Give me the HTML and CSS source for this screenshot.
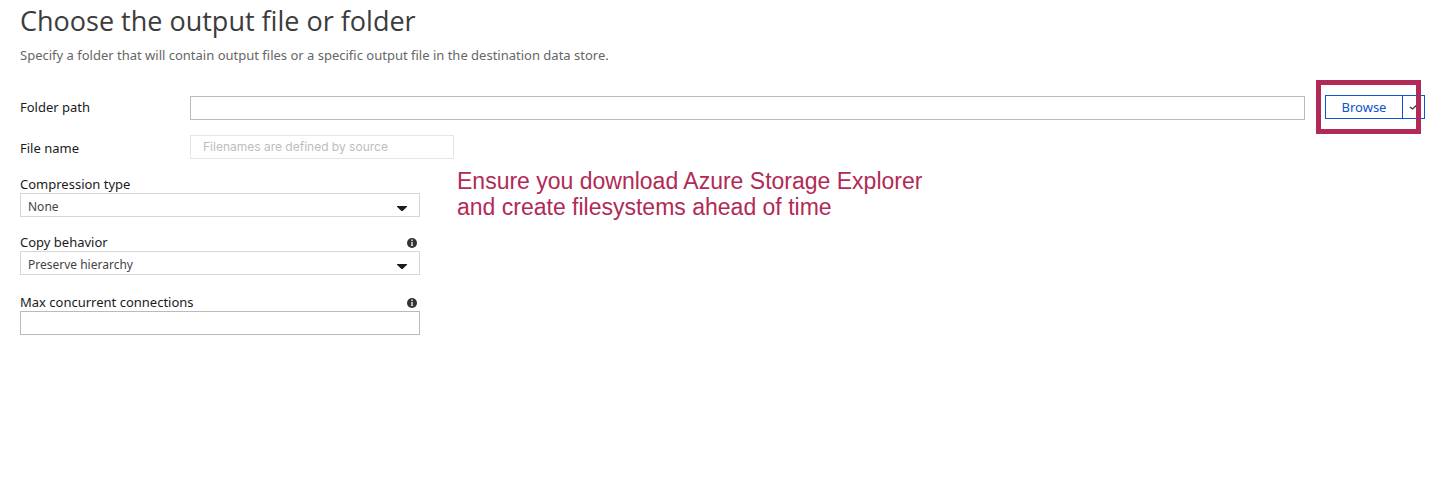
FILE: index.html
```html
<!DOCTYPE html>
<html lang="en">
<head>
<meta charset="utf-8">
<title>Choose the output file or folder</title>
<link rel="stylesheet" href="styles.css">
</head>
<body>
<main class="page">
  <h1 class="title">Choose the output file or folder</h1>
  <p class="subtitle">Specify a folder that will contain output files or a specific output file in the destination data store.</p>
  <form class="form">
    <div class="row row-folder">
      <label class="row-label" for="folder">Folder path</label>
      <input class="box folder" id="folder" type="text">
      <div class="split">
        <button class="browse" type="button">Browse</button>
        <button class="more" type="button" aria-label="More browse options"><svg width="10" height="8" viewBox="0 0 10 8"><path d="M1 4 3.500 6 9 1" fill="none" stroke="#333" stroke-width="1.300"/></svg></button>
        <span class="highlight"></span>
      </div>
    </div>
    <div class="row row-file">
      <label class="row-label" for="file">File name</label>
      <input class="box file" id="file" type="text" placeholder="Filenames are defined by source" disabled>
    </div>
    <div class="lower">
      <div class="fields">
        <div class="field">
          <div class="field-head"><label for="compression">Compression type</label></div>
          <div class="select-wrap">
            <select class="box select" id="compression"><option>None</option></select>
            <svg class="caret" width="10" height="6" viewBox="0 0 10 6"><path d="M0 0H10V.8L5.600 5H4.400L0 .8Z" fill="#1b1b1b"/></svg>
          </div>
        </div>
        <div class="field">
          <div class="field-head"><label for="copy">Copy behavior</label>
            <svg class="info" width="10" height="10" viewBox="0 0 10 10"><circle cx="5" cy="5" r="5" fill="#333"/><path d="M4.200 1.600H5.800V3H4.200ZM4 3.900H5.800V7.300H6.200V8.100H3.800V7.300H4.300V4.700H4Z" fill="#ddd"/></svg></div>
          <div class="select-wrap">
            <select class="box select" id="copy"><option>Preserve hierarchy</option></select>
            <svg class="caret" width="10" height="6" viewBox="0 0 10 6"><path d="M0 0H10V.8L5.600 5H4.400L0 .8Z" fill="#1b1b1b"/></svg>
          </div>
        </div>
        <div class="field field-max">
          <div class="field-head"><label for="max">Max concurrent connections</label>
            <svg class="info" width="10" height="10" viewBox="0 0 10 10"><circle cx="5" cy="5" r="5" fill="#333"/><path d="M4.200 1.600H5.800V3H4.200ZM4 3.900H5.800V7.300H6.200V8.100H3.800V7.300H4.300V4.700H4Z" fill="#ddd"/></svg></div>
          <input class="box" id="max" type="text">
        </div>
      </div>
      <p class="note">Ensure you download Azure Storage Explorer<br>and create filesystems ahead of time</p>
    </div>
  </form>
</main>
</body>
</html>
```
FILE: styles.css
```css
* { box-sizing: border-box; }
body {
  margin: 0;
  background: #fff;
  color: #1b1b1b;
  font: 13px/18px "Noto Sans", sans-serif;
}
.page { padding: 2px 8px 20px 20px; }
.title {
  margin: 0;
  font: 400 27px/38px "Open Sans", sans-serif;
  color: #3c3c3c;
}
.subtitle { margin: 6px 0 0; color: #666; }
.form { margin-top: 31px; }
.row { display: flex; align-items: center; }
.row-folder { align-items: flex-end; }
.row-file { margin-top: 15px; }
.row-label { width: 170px; flex: none; padding-top: 1px; }
.row-folder .row-label { padding: 0 0 4px; }
.box {
  display: block;
  width: 100%;
  height: 24px;
  border: 1px solid #bababa;
  border-radius: 0;
  background: #fff;
  padding: 0 7px;
  font: inherit;
}
.folder { flex: 1; min-width: 0; }
.file {
  width: 264px;
  border-color: #e5e5e5;
  padding: 0 12px 2px;
  font: 12px "Inter", sans-serif;
}
.file::placeholder { color: #bdbdbd; opacity: 1; }
.split { position: relative; display: flex; width: 100px; margin: 0 0 1px 20px; }
.browse, .more {
  height: 24px;
  padding: 0;
  border: 1px solid #0b54d0;
  background: #fff;
  color: #0b54d0;
  font: inherit;
}
.browse { flex: 1; }
.more { display: flex; align-items: center; justify-content: center; width: 22px; border-left: 0; }
.highlight {
  position: absolute;
  top: -15px;
  right: 4px;
  bottom: -15px;
  left: -9px;
  border: 5px solid #b12a57;
  pointer-events: none;
}
.lower { display: flex; align-items: flex-start; gap: 37px; margin-top: 16px; }
.fields { display: grid; gap: 16px; width: 400px; flex: none; }
.field-max { margin-top: 2px; }
.field-head { display: flex; align-items: center; justify-content: space-between; padding-right: 3px; }
.info { margin-top: 1px; }
.select-wrap { position: relative; }
.select { appearance: none; border-color: #d6d6d6; padding-top: 3px; color: #444; font-size: 12px; }
.caret { position: absolute; top: 13px; right: 13px; pointer-events: none; }
.note {
  margin: -7px 0 0;
  color: #b12a57;
  font: 23px/26px "Liberation Sans", Arial, sans-serif;
}
```
